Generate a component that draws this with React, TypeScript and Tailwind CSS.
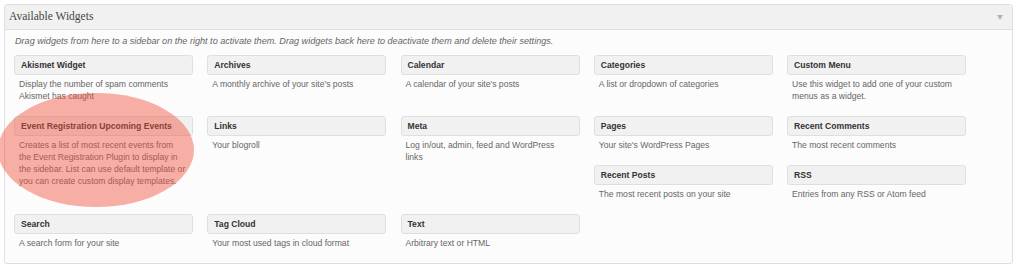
import React from "react";

type W = { t: string; d: string; cls: string };

const widgets: W[] = [
  { t: "Akismet Widget", d: "Display the number of spam comments Akismet has caught", cls: "col-start-1 row-start-1" },
  { t: "Archives", d: "A monthly archive of your site's posts", cls: "col-start-2 row-start-1" },
  { t: "Calendar", d: "A calendar of your site's posts", cls: "col-start-3 row-start-1" },
  { t: "Categories", d: "A list or dropdown of categories", cls: "col-start-4 row-start-1" },
  { t: "Custom Menu", d: "Use this widget to add one of your custom menus as a widget.", cls: "col-start-5 row-start-1" },
  { t: "Event Registration Upcoming Events", d: "Creates a list of most recent events from the Event Registration Plugin to display in the sidebar. List can use default template or you can create custom display templates.", cls: "col-start-1 row-start-2 row-span-2" },
  { t: "Links", d: "Your blogroll", cls: "col-start-2 row-start-2 row-span-2" },
  { t: "Meta", d: "Log in/out, admin, feed and WordPress links", cls: "col-start-3 row-start-2 row-span-2" },
  { t: "Pages", d: "Your site's WordPress Pages", cls: "col-start-4 row-start-2" },
  { t: "Recent Comments", d: "The most recent comments", cls: "col-start-5 row-start-2" },
  { t: "Recent Posts", d: "The most recent posts on your site", cls: "col-start-4 row-start-3" },
  { t: "RSS", d: "Entries from any RSS or Atom feed", cls: "col-start-5 row-start-3" },
  { t: "Search", d: "A search form for your site", cls: "col-start-1 row-start-4" },
  { t: "Tag Cloud", d: "Your most used tags in cloud format", cls: "col-start-2 row-start-4" },
  { t: "Text", d: "Arbitrary text or HTML", cls: "col-start-3 row-start-4" },
];

export default function App() {
  return (
    <div className="relative w-[1024px] h-[276px] bg-white overflow-hidden font-['Liberation_Sans',Arial,sans-serif]">
      <div className="ml-[4px] mt-[4px] w-[1009px] h-[260px] border border-[#dfdfdf] rounded-[3px] bg-[#fcfcfc] flex flex-col">
        <div className="h-[25px] bg-[#f1f1f1] border-b border-[#dfdfdf] flex items-center justify-between pl-[4px] pr-[9px]">
          <span className="font-['Liberation_Serif','Times_New_Roman',serif] text-[11.5px] text-[#464646] leading-none">
            Available Widgets
          </span>
          <svg width="6" height="5" viewBox="0 0 6 5">
            <polygon points="0,0 6,0 3,5" fill="#b4b4b4" />
          </svg>
        </div>
        <p className="mt-[5px] ml-[10px] text-[9.1px] italic leading-[12px] text-[#666]">
          Drag widgets from here to a sidebar on the right to activate them. Drag widgets back here to deactivate them and delete their settings.
        </p>
        <div className="mt-[8px] ml-[9px] grid grid-cols-[repeat(5,179px)] gap-x-[14.25px] grid-rows-[61px_49px_49px_auto]">
          {widgets.map((w) => (
            <div key={w.t} className={w.cls}>
              <div className="h-[20px] bg-[#f1f1f1] border border-[#dfdfdf] rounded-[3px] flex items-center pl-[6px] text-[8.6px] font-bold text-[#333]">
                {w.t}
              </div>
              <p className="mt-[3px] pl-[5px] pr-[6px] text-[8.6px] leading-[12px] text-[#666]">{w.d}</p>
            </div>
          ))}
        </div>
      </div>
      <div className="absolute left-[-2px] top-[93px] w-[196px] h-[114px] rounded-[50%] bg-[rgba(240,80,60,0.45)] pointer-events-none" />
    </div>
  );
}
